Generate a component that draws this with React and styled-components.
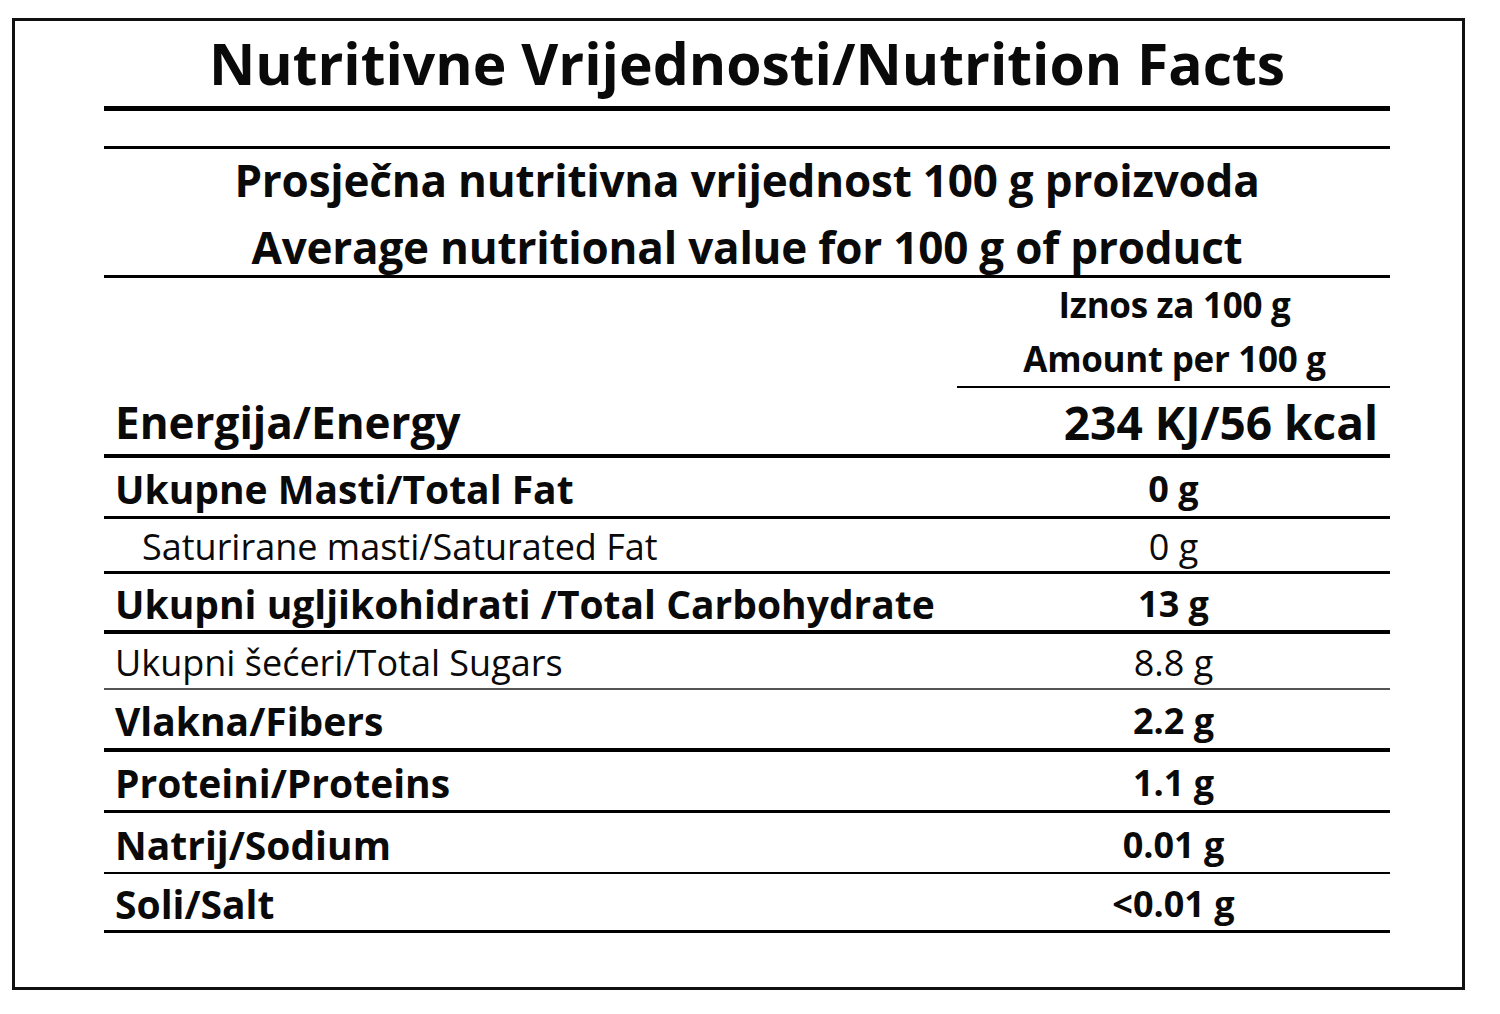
import React from "react";
import styled, { createGlobalStyle } from "styled-components";

const Global = createGlobalStyle`
  html, body { margin: 0; padding: 0; background: #fff; }
  body {
    font-family: "Open Sans", "Noto Sans", sans-serif;
    color: #0a0a0a;
    font-variant-ligatures: none;
  }
`;

const Card = styled.div`
  box-sizing: border-box;
  width: 1453px;
  height: 972px;
  margin: 18px 0 0 12px;
  border: 3px solid #111;
  padding: 0 72px 0 89px;
`;

const Title = styled.h1`
  box-sizing: border-box;
  margin: 0;
  height: 90px;
  border-bottom: 5px solid #000;
  font-size: 57px;
  font-weight: 700;
  line-height: 84px;
  text-align: center;
`;

const Blank = styled.div`
  box-sizing: border-box;
  height: 38px;
  border-bottom: 3px solid #000;
`;

const Header = styled.div`
  box-sizing: border-box;
  height: 129px;
  border-bottom: 3px solid #000;
  display: flex;
  flex-direction: column;
  justify-content: center;
  text-align: center;
  font-size: 44px;
  font-weight: 700;
  line-height: 67px;
  letter-spacing: -0.2px;
  padding-top: 4px;
`;

const Row = styled.div`
  box-sizing: border-box;
  display: grid;
  grid-template-columns: 1fr 433px;
  align-items: center;
  height: ${p => p.h}px;
  border-bottom: ${p => p.b}px solid ${p => p.gray ? "#555" : "#000"};
  padding-top: ${p => p.pt ?? 3}px;
`;

const AmountRow = styled.div`
  display: grid;
  grid-template-columns: 1fr 433px;
  height: 107px;
`;

const AmountCell = styled.div`
  box-sizing: border-box;
  border-bottom: 2px solid #000;
  display: flex;
  flex-direction: column;
  justify-content: center;
  text-align: center;
  font-size: 35px;
  font-weight: 700;
  line-height: 54px;
  letter-spacing: -0.3px;
  padding-left: 2px;
`;

const Label = styled.div`
  padding-left: ${p => p.indent ? 38 : 11}px;
  font-size: ${p => p.size || 39}px;
  font-weight: ${p => p.light ? 400 : 700};
  white-space: nowrap;
`;

const Value = styled.div`
  text-align: ${p => p.right ? "right" : "center"};
  padding-right: ${p => p.right ? 12 : 0}px;
  font-size: ${p => p.size || 36}px;
  font-weight: ${p => p.light ? 400 : 700};
  white-space: nowrap;
`;

const rows = [
  { label: "Ukupne Masti/Total Fat", value: "0 g", h: 61, b: 3 },
  { label: "Saturirane masti/Saturated Fat", value: "0 g", h: 55, b: 3, light: true, indent: true },
  { label: "Ukupni ugljikohidrati /Total Carbohydrate", value: "13 g", h: 60, b: 4 },
  { label: "Ukupni šećeri/Total Sugars", value: "8.8 g", h: 56, b: 2, light: true, gray: true },
  { label: "Vlakna/Fibers", value: "2.2 g", h: 62, b: 4 },
  { label: "Proteini/Proteins", value: "1.1 g", h: 61, b: 3 },
  { label: "Natrij/Sodium", value: "0.01 g", h: 61, b: 2 },
  { label: "Soli/Salt", value: "<0.01 g", h: 59, b: 3 },
];

export default function App() {
  return (
    <>
      <Global />
      <Card>
        <Title>Nutritivne Vrijednosti/Nutrition Facts</Title>
        <Blank />
        <Header>
          <div>Prosječna nutritivna vrijednost 100 g proizvoda</div>
          <div>Average nutritional value for 100 g of product</div>
        </Header>
        <AmountRow>
          <div />
          <AmountCell>
            <div>Iznos za 100 g</div>
            <div>Amount per 100 g</div>
          </AmountCell>
        </AmountRow>
        <Row h={73} b={4} pt={5}>
          <Label size={44}>Energija/Energy</Label>
          <Value right size={46}>234 KJ/56 kcal</Value>
        </Row>
        {rows.map(r => (
          <Row key={r.label} h={r.h} b={r.b} gray={r.gray}>
            <Label light={r.light} indent={r.indent} size={r.light ? 36 : 39}>{r.label}</Label>
            <Value light={r.light}>{r.value}</Value>
          </Row>
        ))}
      </Card>
    </>
  );
}
